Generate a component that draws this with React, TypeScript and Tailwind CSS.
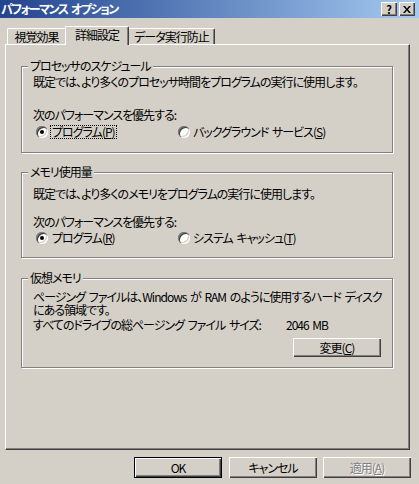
import type { ReactNode } from 'react';

// Win2000-style classic dialog: "パフォーマンス オプション"

function Radio({ checked }: { checked?: boolean }) {
  return (
    <span className="relative inline-block w-[12px] h-[12px] rounded-full bg-white shrink-0 [box-shadow:inset_1px_1px_0_#808080,inset_2px_2px_0_#404040,inset_-1px_-1px_0_#ffffff,inset_-2px_-2px_0_#d4d0c8]">
      {checked && <span className="absolute left-[4px] top-[4px] w-[4px] h-[4px] rounded-full bg-black" />}
    </span>
  );
}

function Group({ title, className, children }: { title: string; className: string; children: ReactNode }) {
  return (
    <div className={`relative border border-[#808080] [box-shadow:1px_1px_0_#ffffff,inset_1px_1px_0_#ffffff] ${className}`}>
      <span className="absolute left-[6px] top-[-8px] px-[2px] bg-[#d4d0c8] leading-[14px]">{title}</span>
      {children}
    </div>
  );
}

function Button({ children, isDefault, disabled, className = '' }: { children: ReactNode; isDefault?: boolean; disabled?: boolean; className?: string }) {
  return (
    <div
      className={`flex items-center justify-center w-[88px] bg-[#d4d0c8] leading-[14px] ${
        isDefault
          ? 'border border-black [box-shadow:inset_1px_1px_0_#ffffff,inset_-1px_-1px_0_#404040,inset_-2px_-2px_0_#808080]'
          : '[box-shadow:inset_1px_1px_0_#ffffff,inset_-1px_-1px_0_#404040,inset_-2px_-2px_0_#808080]'
      } ${disabled ? 'text-[#808080] [text-shadow:1px_1px_0_#ffffff]' : 'text-black'} ${className}`}>
      {children}
    </div>
  );
}

export default function App() {
  return (
    <div className="w-[419px] h-[484px] overflow-hidden bg-[#d4d0c8] text-[12px] leading-[14px] tracking-[-1px] [word-spacing:2px] text-black font-['Noto_Sans_CJK_JP',sans-serif] [font-feature-settings:'palt']">
      {/* Title bar */}
      <div className="h-[18px] flex items-center justify-between bg-gradient-to-r from-[#24448e] to-[#a6caf0]">
        <span className="pl-[1px] font-bold text-white tracking-[-1.5px]">パフォーマンス オプション</span>
        <div className="flex gap-[2px] pr-[4px]">
          <div className="w-[16px] h-[14px] flex items-center justify-center bg-[#d4d0c8] font-bold text-[11px] leading-none tracking-normal [box-shadow:inset_1px_1px_0_#ffffff,inset_-1px_-1px_0_#404040,inset_-2px_-2px_0_#808080]">
            ?
          </div>
          <div className="w-[16px] h-[14px] flex items-center justify-center bg-[#d4d0c8] [box-shadow:inset_1px_1px_0_#ffffff,inset_-1px_-1px_0_#404040,inset_-2px_-2px_0_#808080]">
            <svg width="8" height="7" viewBox="0 0 8 7">
              <path d="M0 0h2l2 2.5L6 0h2L5 3.5 8 7H6L4 4.5 2 7H0l3-3.5z" fill="#000" />
            </svg>
          </div>
        </div>
      </div>

      {/* Tabs */}
      <div className="mt-[8px] h-[18px] flex items-end pl-[7px]">
        <div className="w-[58px] h-[16px] flex items-center justify-center border-l border-t border-white rounded-tl-[2px]">
          視覚効果
        </div>
        <div className="relative z-10 w-[64px] h-[19px] mb-[-1px] flex items-start pt-[1px] justify-center bg-[#d4d0c8] border-l border-t border-r border-white border-r-[#404040] rounded-t-[2px] [box-shadow:inset_-1px_0_0_#808080]">
          詳細設定
        </div>
        <div className="w-[86px] h-[16px] flex items-center justify-center border-t border-r border-white border-r-[#404040] rounded-tr-[2px] [box-shadow:inset_-1px_0_0_#808080]">
          データ実行防止
        </div>
      </div>

      {/* Tab panel */}
      <div className="ml-[5px] w-[405px] h-[406px] pl-[15px] pt-[21px] border border-white border-r-[#404040] border-b-[#404040] [box-shadow:inset_-1px_-1px_0_#808080]">
        <Group title="プロセッサのスケジュール" className="w-[372px] h-[87px] pl-[11px]">
          <div className="mt-[8px]">既定では、より多くのプロセッサ時間をプログラムの実行に使用します。</div>
          <div className="mt-[19px]">次のパフォーマンスを優先する:</div>
          <div className="mt-[3px] flex items-center">
            <div className="w-[145px] flex items-center pl-[3px]">
              <Radio checked />
              <span className="ml-[2px] px-[1px] border border-dotted border-black leading-[12px]">
                プログラム(<u>P</u>)
              </span>
            </div>
            <Radio />
            <span className="ml-[3px]">
              バックグラウンド サービス(<u>S</u>)
            </span>
          </div>
        </Group>

        <Group title="メモリ使用量" className="mt-[19px] w-[372px] h-[86px] pl-[11px]">
          <div className="mt-[14px]">既定では、より多くのメモリをプログラムの実行に使用します。</div>
          <div className="mt-[14px]">次のパフォーマンスを優先する:</div>
          <div className="mt-[2px] flex items-center">
            <div className="w-[145px] flex items-center pl-[3px]">
              <Radio checked />
              <span className="ml-[4px]">
                プログラム(<u>R</u>)
              </span>
            </div>
            <Radio />
            <span className="ml-[3px]">
              システム キャッシュ(<u>T</u>)
            </span>
          </div>
        </Group>

        <Group title="仮想メモリ" className="mt-[20px] w-[372px] h-[90px] pl-[11px] pr-[11px]">
          <div className="mt-[11px] leading-[13px] whitespace-nowrap">
            ページング ファイルは、Windows が RAM のように使用するハード ディスク
            <br />
            にある領域です。
          </div>
          <div className="mt-[2px] flex">
            <span className="w-[253px]">すべてのドライブの総ページング ファイル サイズ:</span>
            <span>2046 MB</span>
          </div>
          <div className="mt-[6px] flex justify-end">
            <Button className="h-[19px]">
              変更(<u>C</u>)
            </Button>
          </div>
        </Group>
      </div>

      {/* Dialog buttons */}
      <div className="mt-[7px] flex pl-[134px]">
        <Button isDefault className="h-[21px]">
          OK
        </Button>
        <Button className="h-[21px] ml-[7px]">キャンセル</Button>
        <Button disabled className="h-[21px] ml-[6px]">
          適用(<u>A</u>)
        </Button>
      </div>
    </div>
  );
}
